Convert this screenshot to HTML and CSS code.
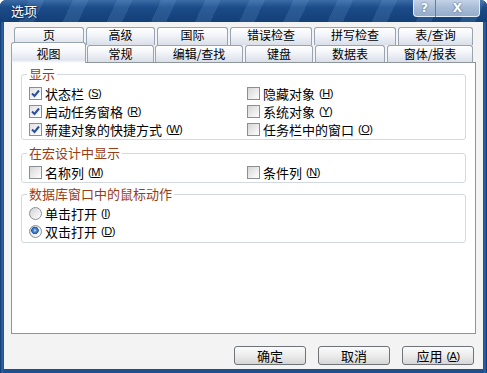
FILE: index.html
```html
<!DOCTYPE html>
<html lang="zh-CN">
<head>
  <meta charset="UTF-8">
  <title>选项</title>
  <link rel="stylesheet" href="styles.css">
</head>
<body>
  <div class="window">
    <!-- Title bar -->
    <div class="titlebar">
      <span class="title">选项</span>
      <div class="caption-btns">
        <span class="cap-btn help">?</span>
        <span class="cap-btn close">X</span>
      </div>
    </div>

    <div class="body">
      <!-- Tabs -->
      <div class="tab-row back">
        <span class="tab">页</span>
        <span class="tab">高级</span>
        <span class="tab">国际</span>
        <span class="tab">错误检查</span>
        <span class="tab">拼写检查</span>
        <span class="tab">表/查询</span>
      </div>
      <div class="tab-row front">
        <span class="tab active">视图</span>
        <span class="tab">常规</span>
        <span class="tab">编辑/查找</span>
        <span class="tab">键盘</span>
        <span class="tab">数据表</span>
        <span class="tab">窗体/报表</span>
      </div>

      <!-- Tab page -->
      <div class="panel">
        <fieldset class="group first">
          <legend>显示</legend>
          <div class="options">
            <label class="opt"><span class="check on"><svg width="11" height="11" viewBox="0 0 11 11"><path d="M2 5.5 L4.5 8 L9 2.5" fill="none" stroke="#2b4f9c" stroke-width="2"/></svg></span>状态栏<span class="key">(<u>S</u>)</span></label>
            <label class="opt"><span class="check"></span>隐藏对象<span class="key">(<u>H</u>)</span></label>
            <label class="opt"><span class="check on"><svg width="11" height="11" viewBox="0 0 11 11"><path d="M2 5.5 L4.5 8 L9 2.5" fill="none" stroke="#2b4f9c" stroke-width="2"/></svg></span>启动任务窗格<span class="key">(<u>R</u>)</span></label>
            <label class="opt"><span class="check"></span>系统对象<span class="key">(<u>Y</u>)</span></label>
            <label class="opt"><span class="check on"><svg width="11" height="11" viewBox="0 0 11 11"><path d="M2 5.5 L4.5 8 L9 2.5" fill="none" stroke="#2b4f9c" stroke-width="2"/></svg></span>新建对象的快捷方式<span class="key">(<u>W</u>)</span></label>
            <label class="opt"><span class="check"></span>任务栏中的窗口<span class="key">(<u>O</u>)</span></label>
          </div>
        </fieldset>

        <fieldset class="group second">
          <legend>在宏设计中显示</legend>
          <div class="options">
            <label class="opt"><span class="check"></span>名称列<span class="key">(<u>M</u>)</span></label>
            <label class="opt"><span class="check"></span>条件列<span class="key">(<u>N</u>)</span></label>
          </div>
        </fieldset>

        <fieldset class="group third">
          <legend>数据库窗口中的鼠标动作</legend>
          <div class="options single">
            <label class="opt"><span class="radio"></span>单击打开<span class="key">(<u>I</u>)</span></label>
            <label class="opt"><span class="radio on"></span>双击打开<span class="key">(<u>D</u>)</span></label>
          </div>
        </fieldset>
      </div>

      <!-- Dialog buttons -->
      <div class="footer">
        <span class="btn">确定</span>
        <span class="btn">取消</span>
        <span class="btn">应用<span class="key">(<u>A</u>)</span></span>
      </div>
    </div>
  </div>
</body>
</html>
```

FILE: styles.css
```css
* {
    margin: 0;
    padding: 0;
    box-sizing: border-box;
}

body {
    width: 487px;
    height: 373px;
    overflow: hidden;
    background: #fff;
    font-family: "Noto Sans CJK SC", "Liberation Sans", sans-serif;
    font-size: 12px;
    color: #000;
}

u {
    text-decoration: underline;
    text-underline-offset: 1px;
}

/* mnemonic like (S) */
.key {
    margin-left: 4px;
    font-family: "Liberation Sans", sans-serif;
    font-size: 11px;
    letter-spacing: -0.5px;
}

/* Window frame */
.window {
    width: 487px;
    height: 373px;
    display: flex;
    flex-direction: column;
    background: linear-gradient(to right, #0d3366 0, #2a66aa 2px, #1d4f8c 4px, #1d4f8c 483px, #2a66aa 485px, #0d3366 487px);
    border-radius: 6px 6px 0 0;
}

.titlebar {
    height: 22px;
    display: flex;
    justify-content: space-between;
    align-items: flex-start;
    padding: 0 7px 0 11px;
    border-radius: 6px 6px 0 0;
    background:
        repeating-linear-gradient(115deg, rgba(255, 255, 255, 0) 0, rgba(255, 255, 255, 0) 26px, rgba(120, 170, 220, 0.18) 26px, rgba(120, 170, 220, 0.18) 40px),
        linear-gradient(to bottom, #3c6ca6 0, #1b4b88 35%, #143f77 100%);
}

.title {
    margin-top: 3px;
    color: #fff;
    font-size: 13px;
    line-height: 16px;
    text-shadow: 0 0 2px #0a2a55, 1px 1px 1px #0a2a55;
}

.caption-btns {
    display: flex;
    height: 17px;
}

.cap-btn {
    height: 17px;
    display: flex;
    align-items: center;
    justify-content: center;
    color: #fff;
    font-family: "DejaVu Sans", sans-serif;
    font-weight: bold;
    font-size: 12px;
    text-shadow: 0 0 2px #3a5475;
    border: 1px solid #e4ecf6;
    border-top: none;
    background: linear-gradient(to bottom, #c3d2e6 0, #a6bbd6 50%, #94acca 100%);
}

.cap-btn.help {
    width: 22px;
    border-radius: 0 0 0 4px;
    border-right: none;
}

.cap-btn.close {
    width: 45px;
    border-radius: 0 0 4px 0;
    border-left: 1px solid #5f7ea6;
}

/* Dialog body */
.body {
    flex: 1;
    margin: 0 4px 4px;
    background: #f3f3f3;
    padding-top: 5px;
    display: flex;
    flex-direction: column;
}

.tab-row {
    display: flex;
    align-items: flex-start;
}

.tab-row.back {
    height: 18px;
    margin-left: 10px;
    gap: 2px;
}

.tab-row.front {
    height: 17px;
    margin-left: 7px;
}

.tab {
    display: flex;
    justify-content: center;
    align-items: center;
    font-size: 12px;
    line-height: 12px;
    border: 1px solid #98a3b4;
    border-radius: 3px 3px 0 0;
    background: linear-gradient(to bottom, #ffffff 0, #f3f5f9 40%, #d9dee8 100%);
}

.back .tab {
    height: 18px;
    padding-bottom: 3px;
    border-bottom: none;
}

.front .tab {
    height: 17px;
    border-bottom: none;
}

.back .tab:nth-child(1) { width: 70px; }
.back .tab:nth-child(2) { width: 69px; }
.back .tab:nth-child(3) { width: 71px; }
.back .tab:nth-child(4) { width: 82px; }
.back .tab:nth-child(5) { width: 82px; }
.back .tab:nth-child(6) { width: 75px; }

.front .tab:nth-child(1) { width: 75px; }
.front .tab:nth-child(2) { width: 67px; margin-left: 1px; }
.front .tab:nth-child(3) { width: 88px; margin-left: 1px; }
.front .tab:nth-child(4) { width: 68px; margin-left: 2px; }
.front .tab:nth-child(5) { width: 70px; margin-left: 2px; }
.front .tab:nth-child(6) { width: 86px; margin-left: 2px; }

.front .tab.active {
    height: 21px;
    margin-top: -3px;
    padding-top: 1px;
    position: relative;
    z-index: 2;
    background: linear-gradient(to bottom, #ffffff 0, #f4f6fa 45%, #dfe4ee 85%, #ffffff 100%);
}

/* Tab page */
.panel {
    width: 465px;
    height: 272px;
    margin-left: 7px;
    background: #fff;
    border: 1px solid #8e9699;
    display: flex;
    flex-direction: column;
}

.group {
    margin: 0 9px;
    padding: 0;
    border: 1px solid #d4d9df;
    border-radius: 3px;
}

.group.first { margin-top: 3px; }
.group.second { margin-top: 5px; }
.group.third { margin-top: 3px; }

.group legend {
    margin-left: 5px;
    padding: 0 2px;
    font-size: 13px;
    line-height: 16px;
    color: #9b3b14;
}

.options {
    display: grid;
    grid-template-columns: 218px 1fr;
    padding: 2px 0 1px 7px;
}

.options.single {
    grid-template-columns: 1fr;
    padding-bottom: 2px;
}

.opt {
    height: 18px;
    display: flex;
    align-items: center;
    font-size: 13px;
    white-space: nowrap;
}

.check,
.radio {
    width: 13px;
    height: 13px;
    flex: none;
    margin-right: 3px;
    border: 1px solid #8a8f96;
}

.check {
    display: flex;
    align-items: center;
    justify-content: center;
    background: linear-gradient(135deg, #d6d6d6 0, #eeeeee 60%, #ffffff 100%);
}

.check.on {
    background: linear-gradient(135deg, #e2e2e2 0, #f4f4f4 60%, #ffffff 100%);
}

.radio {
    border-radius: 50%;
    background: linear-gradient(135deg, #d2d2d2 0, #eeeeee 60%, #ffffff 100%);
}

.radio.on {
    background:
        radial-gradient(circle at 45% 40%, #d8ecff 0, #4c8dd6 1.5px, #1f5aa8 3.5px, rgba(0, 0, 0, 0) 4px),
        linear-gradient(135deg, #d2d2d2 0, #eeeeee 60%, #ffffff 100%);
}

/* Dialog buttons */
.footer {
    flex: 1;
    display: flex;
    justify-content: flex-end;
    align-items: flex-start;
    gap: 12px;
    padding: 12px 9px 0 0;
}

.btn {
    width: 72px;
    height: 19px;
    display: flex;
    align-items: center;
    justify-content: center;
    font-size: 13px;
    border: 1px solid #6f7276;
    border-radius: 3px;
    background: linear-gradient(to bottom, #fbfbfb 0, #ececec 50%, #d6d6d6 100%);
}
```
